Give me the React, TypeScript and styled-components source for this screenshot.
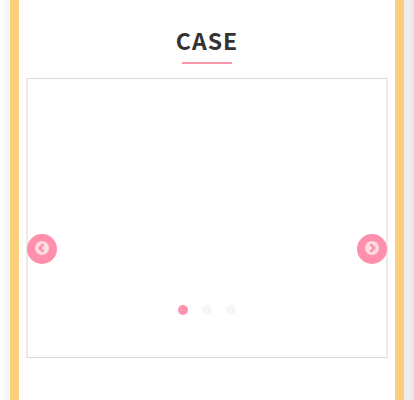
import React from "react";
import styled, { createGlobalStyle } from "styled-components";

const GlobalStyle = createGlobalStyle`
  *, *::before, *::after { box-sizing: border-box; }
  body {
    margin: 0;
    background: linear-gradient(90deg, #fdfdfd 0, #f4f4f4 10px, #eee calc(100% - 6px), #e6e6e6 100%);
    font-family: "Noto Sans CJK JP", "Noto Sans", sans-serif;
  }
`;

const Page = styled.main`
  min-height: 100vh;
  margin: 0 10px;
  padding: 24px 7px 42px;
  border: solid #fccf7c;
  border-width: 0 9px;
  background: #fff;
`;

const Title = styled.h2`
  display: flex;
  flex-direction: column;
  align-items: center;
  gap: 6px;
  margin: 0 0 14px;
  color: #333;
  font-size: 23px;
  font-weight: 700;
  line-height: 32px;
  letter-spacing: 1px;

  &::after {
    content: "";
    width: 50px;
    height: 2px;
    background: #fb96aa;
  }
`;

const Carousel = styled.section`
  display: flex;
  flex-direction: column;
  height: 280px;
  padding-top: 155px;
  border: solid;
  border-width: 1px 2px;
  border-color: #d9d9d9 #ebebeb;
`;

const Arrows = styled.div`
  display: flex;
  justify-content: space-between;
  margin: 0 -1px;
`;

const ArrowButton = styled.button`
  display: grid;
  place-items: center;
  width: 30px;
  height: 30px;
  padding: 0 0 2px;
  border: 0;
  border-radius: 50%;
  background: #ff8fab;
`;

const Dots = styled.div`
  display: flex;
  justify-content: center;
  gap: 14px;
  margin-top: 41px;
`;

const Dot = styled.button<{ $active?: boolean }>`
  width: 10px;
  height: 10px;
  padding: 0;
  border: 0;
  border-radius: 50%;
  background: ${({ $active }) => ($active ? "#ff94ae" : "#f6f6f6")};
`;

function Arrow({ direction }: { direction: "left" | "right" }) {
  return (
    <svg width="14" height="14" viewBox="0 0 14 14" aria-hidden="true">
      <circle cx="7" cy="7" r="7" fill="#ffdde6" />
      <path d={direction === "left" ? "M8.5 3.1 4.6 7l3.9 3.9" : "M5.5 3.1 9.4 7l-3.9 3.9"} fill="none" stroke="#ff8fab" strokeWidth="2.5" />
    </svg>
  );
}

export default function App() {
  return (
    <>
      <GlobalStyle />
      <Page>
        <Title>CASE</Title>
        <Carousel aria-label="Case">
          <Arrows>
            <ArrowButton aria-label="Previous"><Arrow direction="left" /></ArrowButton>
            <ArrowButton aria-label="Next"><Arrow direction="right" /></ArrowButton>
          </Arrows>
          <Dots>
            <Dot $active aria-label="Slide 1" />
            <Dot aria-label="Slide 2" />
            <Dot aria-label="Slide 3" />
          </Dots>
        </Carousel>
      </Page>
    </>
  );
}
